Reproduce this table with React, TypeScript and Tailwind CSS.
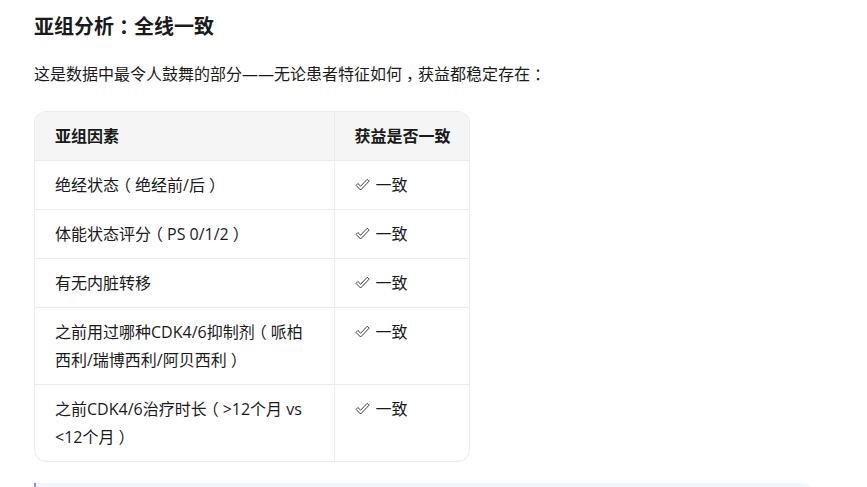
import type { ReactNode } from "react";

const rows: { factor: string }[] = [
  { factor: "绝经状态（绝经前/后）" },
  { factor: "体能状态评分（PS 0/1/2）" },
  { factor: "有无内脏转移" },
  { factor: "之前用过哪种CDK4/6抑制剂（哌柏西利/瑞博西利/阿贝西利）" },
  { factor: "之前CDK4/6治疗时长（>12个月 vs <12个月）" },
];

// full-width punctuation gets a centred 1em box, like the original font
const Cjk = ({ text }: { text: string }) => {
  const parts: ReactNode[] = [];
  text.split(/([（），：])/).forEach((p, i) => {
    if (!p) return;
    if (/^[（），：]$/.test(p)) {
      parts.push(
        <span
          key={i}
          className="inline-block w-[1em] text-center [font-feature-settings:'halt']"
        >
          {p}
        </span>
      );
    } else {
      parts.push(p);
    }
  });
  return <>{parts}</>;
};

const CheckIcon = () => (
  <svg width="15" height="14" viewBox="0 0 15 14" className="inline-block shrink-0">
    <path
      d="M1 7.4 L2.9 5.5 L5.6 8.2 L12.2 1.3 L14.1 3.2 L5.6 12 Z"
      fill="none"
      stroke="#3a3a3a"
      strokeWidth="1"
    />
  </svg>
);

export default function App() {
  return (
    <div
      className="min-h-screen bg-white px-[34px] pt-[13px] text-[#1a1a1a]"
      style={{ fontFamily: '"Open Sans", "Noto Sans CJK SC", sans-serif' }}
    >
      <h2 className="text-[20px] leading-[28px] font-bold">
        <Cjk text="亚组分析：全线一致" />
      </h2>
      <p className="mt-[19px] text-[16px] leading-[28px]">
        <Cjk text="这是数据中最令人鼓舞的部分——无论患者特征如何，获益都稳定存在：" />
      </p>

      <div className="mt-[23px] w-[436px] overflow-hidden rounded-[12px] border border-[#ebebeb]">
        <table className="w-full table-fixed border-collapse text-[16px] leading-[28px]">
          <colgroup>
            <col className="w-[299px]" />
            <col />
          </colgroup>
          <thead>
            <tr className="bg-[#f5f5f5]">
              <th className="border-b border-r border-[#ebebeb] px-[20px] py-[10px] text-left font-bold whitespace-nowrap">
                亚组因素
              </th>
              <th className="border-b border-[#ebebeb] pl-[20px] pr-0 py-[10px] text-left font-bold whitespace-nowrap">
                获益是否一致
              </th>
            </tr>
          </thead>
          <tbody>
            {rows.map((r, i) => (
              <tr key={i}>
                <td
                  className={`border-r border-[#ebebeb] px-[20px] py-[10px] align-top ${
                    i < rows.length - 1 ? "border-b" : ""
                  }`}
                >
                  <Cjk text={r.factor} />
                </td>
                <td
                  className={`border-[#ebebeb] pl-[20px] pr-0 py-[10px] align-top ${
                    i < rows.length - 1 ? "border-b" : ""
                  }`}
                >
                  <span className="flex items-center gap-[6px]">
                    <CheckIcon />
                    一致
                  </span>
                </td>
              </tr>
            ))}
          </tbody>
        </table>
      </div>

      <div className="mt-[21px] h-[40px] w-[779px] rounded-r-[10px] border-l-2 border-[#8b8cf5] bg-[#f3f5ff]" />
    </div>
  );
}
